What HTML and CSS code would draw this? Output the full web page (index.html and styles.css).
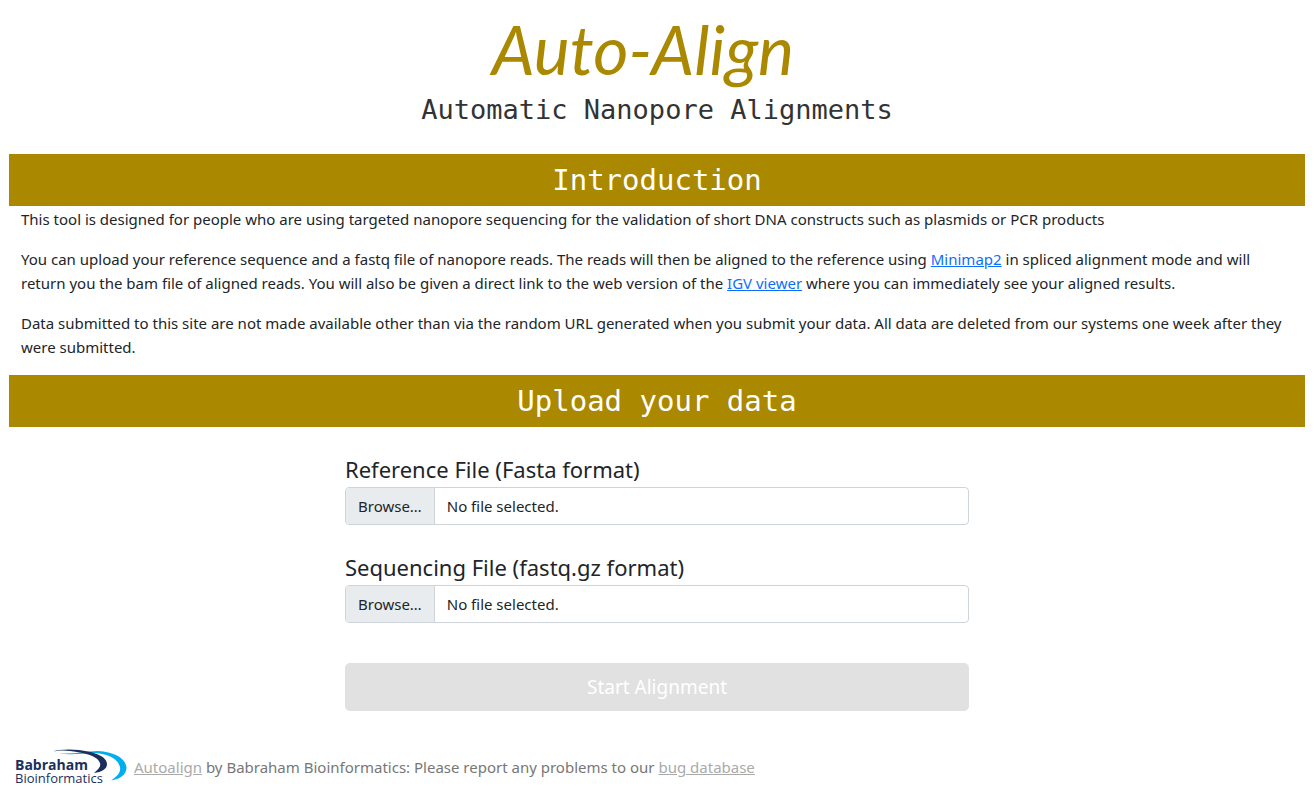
FILE: index.html
```html
<!DOCTYPE html>
<html lang="en">
<head>
<meta charset="utf-8">
<meta name="viewport" content="width=device-width, initial-scale=1">
<title>Auto-Align</title>
<link rel="stylesheet" href="styles.css">
</head>
<body>
<header class="masthead">
  <h1 class="brand">Auto-Align</h1>
  <p class="tagline">Automatic Nanopore Alignments</p>
</header>
<main>
  <section>
    <h2 class="bar">Introduction</h2>
    <div class="intro">
      <p>This tool is designed for people who are using targeted nanopore sequencing for the validation of short DNA constructs such as plasmids or PCR products</p>
      <p>You can upload your reference sequence and a fastq file of nanopore reads. The reads will then be aligned to the reference using <a href="#minimap2">Minimap2</a> in spliced alignment mode and will return you the bam file of aligned reads. You will also be given a direct link to the web version of the <a href="#igv">IGV viewer</a> where you can immediately see your aligned results.</p>
      <p>Data submitted to this site are not made available other than via the random URL generated when you submit your data. All data are deleted from our systems one week after they were submitted.</p>
    </div>
  </section>
  <section>
    <h2 class="bar">Upload your data</h2>
    <form class="upload">
      <div class="field">
        <label class="field-label" for="reference">Reference File (Fasta format)</label>
        <div class="picker">
          <span class="picker-button">Browse…</span>
          <span class="picker-name">No file selected.</span>
          <input class="picker-input" type="file" id="reference">
        </div>
      </div>
      <div class="field">
        <label class="field-label" for="sequencing">Sequencing File (fastq.gz format)</label>
        <div class="picker">
          <span class="picker-button">Browse…</span>
          <span class="picker-name">No file selected.</span>
          <input class="picker-input" type="file" id="sequencing">
        </div>
      </div>
      <button class="start" type="submit" disabled>Start Alignment</button>
    </form>
  </section>
</main>
<footer class="footer">
  <svg class="logo" viewBox="0 -1 116 40" role="img" aria-label="Babraham Bioinformatics">
    <path class="logo-sky" d="M47 5C60 7 72 3 86 3C104 4 114 11 114.500 20C114 27 108 31 99 32.500C106 28 109 24 108 19C106 11 97 6 83 5C70 5 60 8 47 5Z"/>
    <path class="logo-navy" d="M37 4C48 1 58 1 67 2C84 4 95 9 95 16C95 21 90 24 82 25C87 21 89 18 88 15C86 9 77 6 65 4C56 2 47 2 37 4Z"/>
    <text class="logo-name" x="3" y="22">Babraham</text>
    <text class="logo-sub" x="3" y="35">Bioinformatics</text>
  </svg>
  <p><a href="#autoalign">Autoalign</a> by Babraham Bioinformatics: Please report any problems to our <a href="#bugs">bug database</a></p>
</footer>
</body>
</html>
```
FILE: styles.css
```css
* {
  box-sizing: border-box;
}

body {
  margin: 0;
  padding: 0 9px;
  background: #fff;
  color: #212529;
  font: 15px/24px "Noto Sans", sans-serif;
}

h1, h2, p {
  margin: 0;
}

.masthead {
  padding: 8px 0 24px;
  text-align: center;
}

.brand {
  padding-right: 28px;
  color: #aa8800;
  font: italic 400 68px/82px Lato, cursive;
}

.tagline {
  color: #333;
  font: 27px/40px "DejaVu Sans Mono", monospace;
}

.bar {
  padding: 6px 0;
  background: #aa8800;
  color: #fff;
  font: 400 29px/40px "DejaVu Sans Mono", monospace;
  text-align: center;
}

.intro {
  padding: 1px 12px 0;
}

.intro p {
  padding-bottom: 16px;
}

.intro a {
  color: #0d6efd;
}

.upload {
  width: 50%;
  margin: 0 auto;
  padding: 24px 12px 0;
}

.field {
  margin-bottom: 24px;
}

.field-label {
  display: block;
  font-size: 22px;
  line-height: 36px;
}

.picker {
  position: relative;
  display: flex;
  overflow: hidden;
  border: 1px solid #ced4da;
  border-radius: 4px;
  line-height: 24px;
}

.picker:focus-within {
  border-color: #86b7fe;
}

.picker-button,
.picker-name {
  padding: 6px 12px;
}

.picker-button {
  border-right: 1px solid #ced4da;
  background: #e9ecef;
}

.picker-input {
  position: absolute;
  inset: 0;
  width: 100%;
  opacity: 0;
}

.start {
  display: block;
  width: 100%;
  margin-top: 40px;
  padding: 8px 16px;
  border: 0;
  border-radius: 5px;
  background: #e1e1e1;
  color: #fff;
  font: 19px/32px "Noto Sans", sans-serif;
}

.footer {
  display: flex;
  align-items: center;
  gap: 6px;
  padding: 36px 3px 8px;
  color: #777;
}

.footer a {
  color: #aaa;
}

.logo {
  flex: none;
  width: 116px;
  height: 40px;
}

.logo-sky {
  fill: #00aeef;
}

.logo-navy,
.logo-name,
.logo-sub {
  fill: #1b2f5f;
}

.logo-name {
  font: 700 14px "Open Sans", sans-serif;
}

.logo-sub {
  font: 13px "Open Sans", sans-serif;
}
```
